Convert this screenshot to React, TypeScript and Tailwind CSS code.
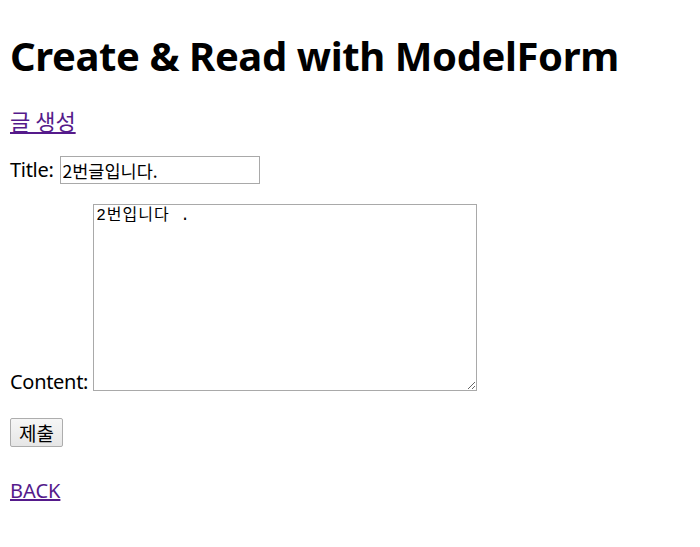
const App = () => {
  return (
    <div className="min-h-screen bg-white px-[10px] pt-[29px] text-black [font-family:'Noto_Sans','Noto_Sans_CJK_KR',sans-serif]">
      <h1 className="text-[40px] font-bold leading-[54px] tracking-[-0.4px]">Create &amp; Read with ModelForm</h1>
      <p className="mt-[23px] text-[20px] leading-[28px]">
        <a href="#" className="text-[22px] text-[#551a8b] underline [font-family:'Noto_Sans_CJK_KR',sans-serif]">
          글 생성
        </a>
      </p>
      <form className="mt-[19px]">
        <p className="flex items-end text-[20px] leading-[28px]">
          <label className="mr-[6px] tracking-[-0.3px]">Title:</label>
          <input
            type="text"
            defaultValue="2번글입니다."
            className="h-[28px] w-[200px] border border-[#a9a9a9] px-[2px] text-[17.5px] leading-[26px] outline-none [font-family:'Noto_Sans_CJK_KR',sans-serif]"
          />
        </p>
        <p className="mt-[20px] flex items-end text-[20px] leading-[28px]">
          <label className="-mb-[5px] mr-[5px] tracking-[-0.3px]">Content:</label>
          <textarea
            defaultValue="2번입니다 ."
            className="h-[187px] w-[384px] resize border border-[#a9a9a9] px-[2px] py-[2px] text-[16px] leading-[18px] tracking-[1px] outline-none [font-family:'Liberation_Mono','Noto_Sans_CJK_KR',monospace]"
          />
        </p>
        <p className="mt-[27px]">
          <button
            type="button"
            className="h-[29px] w-[53px] rounded-[2px] border border-[#adadad] bg-gradient-to-b from-[#f6f6f6] to-[#e6e6e6] text-[19px] leading-[26px] [font-family:'Noto_Sans_CJK_KR',sans-serif]"
          >
            제출
          </button>
        </p>
      </form>
      <p className="mt-[30px] text-[20px] leading-[28px]">
        <a href="#" className="text-[#551a8b] underline">
          BACK
        </a>
      </p>
    </div>
  );
};

export default App;
